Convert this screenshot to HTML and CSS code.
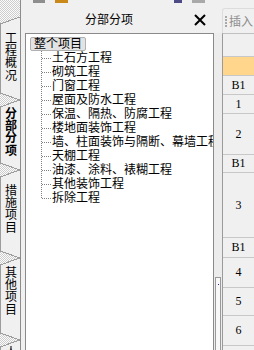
FILE: index.html
```html
<!DOCTYPE html>
<html lang="zh-CN">
<head>
<meta charset="utf-8">
<title>分部分项</title>
<link rel="stylesheet" href="styles.css">
</head>
<body>
<div class="app">
  <svg class="tabs" width="20" height="350" viewBox="0 0 20 350">
    <defs>
      <pattern id="dith" width="2" height="2" patternUnits="userSpaceOnUse">
        <rect width="2" height="2" fill="#fbfbfb"/>
        <rect width="1" height="1" fill="#cdcdcd"/>
        <rect x="1" y="1" width="1" height="1" fill="#cdcdcd"/>
      </pattern>
    </defs>
    <rect width="20" height="350" fill="url(#dith)"/>
    <g fill="#f0f0f0" stroke="#9c9c9c" stroke-width="1" shape-rendering="crispEdges">
      <polygon points="0,24 20,17 20,100 0,93"/>
      <polygon points="0,107 20,100 20,170 0,163"/>
      <polygon points="0,177 20,170 20,258 0,251"/>
      <polygon points="0,265 20,258 20,340 0,333"/>
      <polygon points="0,347 20,340 20,362 0,362"/>
    </g>
    <g class="tab-text">
      <text x="11" y="32">工程概况</text>
      <text class="tab-active" x="11" y="107">分部分项</text>
      <text x="11" y="184">措施项目</text>
      <text x="11" y="266">其他项目</text>
      <text x="11" y="346">人</text>
    </g>
  </svg>

  <div class="main">
    <div class="top">
      <div class="panel-head">
        <div class="stubs">
          <span class="stub stub-a"></span>
          <span class="stub stub-b"></span>
          <span class="stub stub-c"></span>
          <span class="stub stub-d"></span>
        </div>
        <div class="title-row">
          <span class="title">分部分项</span>
          <svg class="close" width="12" height="12" viewBox="0 0 12 12">
            <path d="M1 1 L11 11 M11 1 L1 11" stroke="#000" stroke-width="2" fill="none"/>
          </svg>
        </div>
      </div>
      <div class="toolbar">
        <span class="grip"></span>
        <span class="tb-text">插入</span>
      </div>
    </div>

    <div class="body">
      <div class="tree-wrap">
        <div class="tree">
          <div class="root"><span class="root-label">整个项目</span></div>
          <ul class="children">
            <li><span class="br"></span><span>土石方工程</span></li>
            <li><span class="br"></span><span>砌筑工程</span></li>
            <li><span class="br"></span><span>门窗工程</span></li>
            <li><span class="br"></span><span>屋面及防水工程</span></li>
            <li><span class="br"></span><span>保温、隔热、防腐工程</span></li>
            <li><span class="br"></span><span>楼地面装饰工程</span></li>
            <li><span class="br"></span><span>墙、柱面装饰与隔断、幕墙工程</span></li>
            <li><span class="br"></span><span>天棚工程</span></li>
            <li><span class="br"></span><span>油漆、涂料、裱糊工程</span></li>
            <li><span class="br"></span><span>其他装饰工程</span></li>
            <li><span class="br"></span><span>拆除工程</span></li>
          </ul>
        </div>
      </div>

      <div class="splitter">
        <div class="thumb"><span class="dot"></span></div>
      </div>

      <div class="grid">
        <div class="row h-head"></div>
        <div class="row h-orange"></div>
        <div class="row h-19">B1</div>
        <div class="row h-19">1</div>
        <div class="row h-41">2</div>
        <div class="row h-18">B1</div>
        <div class="row h-65">3</div>
        <div class="row h-20">B1</div>
        <div class="row h-30">4</div>
        <div class="row h-28">5</div>
        <div class="row h-30">6</div>
        <div class="row h-30"></div>
      </div>
    </div>
  </div>
</div>
</body>
</html>
```

FILE: styles.css
```css
* {
  box-sizing: border-box;
  margin: 0;
  padding: 0;
}

html, body {
  width: 254px;
  height: 350px;
  overflow: hidden;
}

body {
  background: #f0f0f0;
  font-family: "Liberation Sans", "Noto Sans CJK SC", sans-serif;
  font-size: 12px;
  color: #000;
}

.app {
  display: flex;
  height: 350px;
}

.tabs {
  display: block;
  flex: none;
  width: 20px;
  height: 350px;
}

.tab-text text {
  font-family: "Noto Sans CJK SC", sans-serif;
  font-size: 12px;
  fill: #000;
  writing-mode: vertical-rl;
  letter-spacing: 0.4px;
}

.tab-text .tab-active {
  font-weight: 700;
}

.main {
  flex: 1;
  min-width: 0;
  display: flex;
  flex-direction: column;
  border-left: 1px solid #8c8c8c;
}

.top {
  display: flex;
  height: 33px;
  flex: none;
}

.panel-head {
  width: 201px;
  flex: none;
  display: flex;
  flex-direction: column;
}

.stubs {
  display: flex;
  height: 3px;
}

.stub {
  height: 3px;
}

.stub-a { margin-left: 12px; width: 12px; background: #8e8e8e; }
.stub-b { margin-left: 10px; width: 13px; background: #c98a1a; }
.stub-c { margin-left: 106px; width: 8px; background: #4d4a86; }
.stub-d { margin-left: 10px; width: 13px; background: #a9a9a9; }

.title-row {
  flex: 1;
  display: flex;
  align-items: center;
  padding-top: 4px;
}

.title {
  margin-left: 64px;
  line-height: 14px;
  white-space: nowrap;
}

.close {
  display: block;
  margin-left: auto;
  margin-right: 16px;
}

.toolbar {
  flex: 1;
  margin-top: 8px;
  display: flex;
  align-items: center;
  padding-left: 2px;
  padding-top: 2px;
  border-top: 1px solid #dcdcdc;
  border-left: 1px solid #dcdcdc;
  border-top-left-radius: 3px;
  overflow: hidden;
}

.grip {
  flex: none;
  width: 2px;
  height: 12px;
  background: repeating-linear-gradient(to bottom, #a8a8a8 0 2px, transparent 2px 3px);
}

.tb-text {
  margin-left: 2px;
  color: #8d8d8d;
  white-space: nowrap;
  line-height: 14px;
}

.body {
  flex: 1;
  min-height: 0;
  display: flex;
}

.tree-wrap {
  width: 193px;
  flex: none;
  padding-left: 4px;
}

.tree {
  width: 189px;
  height: 100%;
  background: #fff;
  border: 1px solid #8a8a8a;
  border-bottom: none;
  overflow: hidden;
  padding: 3px 0 0 4px;
  line-height: 14px;
  white-space: nowrap;
}

.root {
  display: flex;
  height: 14px;
}

.root-label {
  display: block;
  height: 14px;
  line-height: 12px;
  padding: 0 3px;
  background: #e3e3e3;
  border: 1px solid #b0b0b0;
  border-radius: 2px;
}

.children {
  list-style: none;
  margin-left: 11px;
  border-left: 1px dotted #808080;
}

.children li {
  display: flex;
  height: 14px;
  line-height: 14px;
}

.children li:last-child {
  height: 7px;
}

.br {
  flex: none;
  width: 9px;
  height: 8px;
  margin-right: 1px;
  border-bottom: 1px dotted #808080;
}

.splitter {
  width: 8px;
  flex: none;
  display: flex;
  flex-direction: column;
  padding-left: 1px;
  background: #ececec;
}

.thumb {
  margin-top: 244px;
  width: 6px;
  flex: 1;
  border: 1px solid #9a9a9a;
  border-bottom: none;
  background: #f8f8f8;
}

.dot {
  display: block;
  width: 1px;
  height: 1px;
  margin: 6px 0 0 2px;
  background: #2a2a9a;
}

.grid {
  flex: 1;
  min-width: 0;
  border-left: 1px solid #9a9a9a;
  border-top: 1px solid #c0c0c0;
  background: #f0f0f0;
  font-family: "Liberation Serif", serif;
  font-size: 12px;
}

.row {
  display: flex;
  align-items: center;
  justify-content: center;
  border-bottom: 1px solid #c8c8c8;
}

.h-head { height: 23px; }
.h-orange { height: 19px; background: #ffd68c; }
.h-18 { height: 18px; }
.h-19 { height: 19px; }
.h-20 { height: 20px; }
.h-28 { height: 28px; }
.h-30 { height: 30px; }
.h-41 { height: 41px; }
.h-65 { height: 65px; }
```
